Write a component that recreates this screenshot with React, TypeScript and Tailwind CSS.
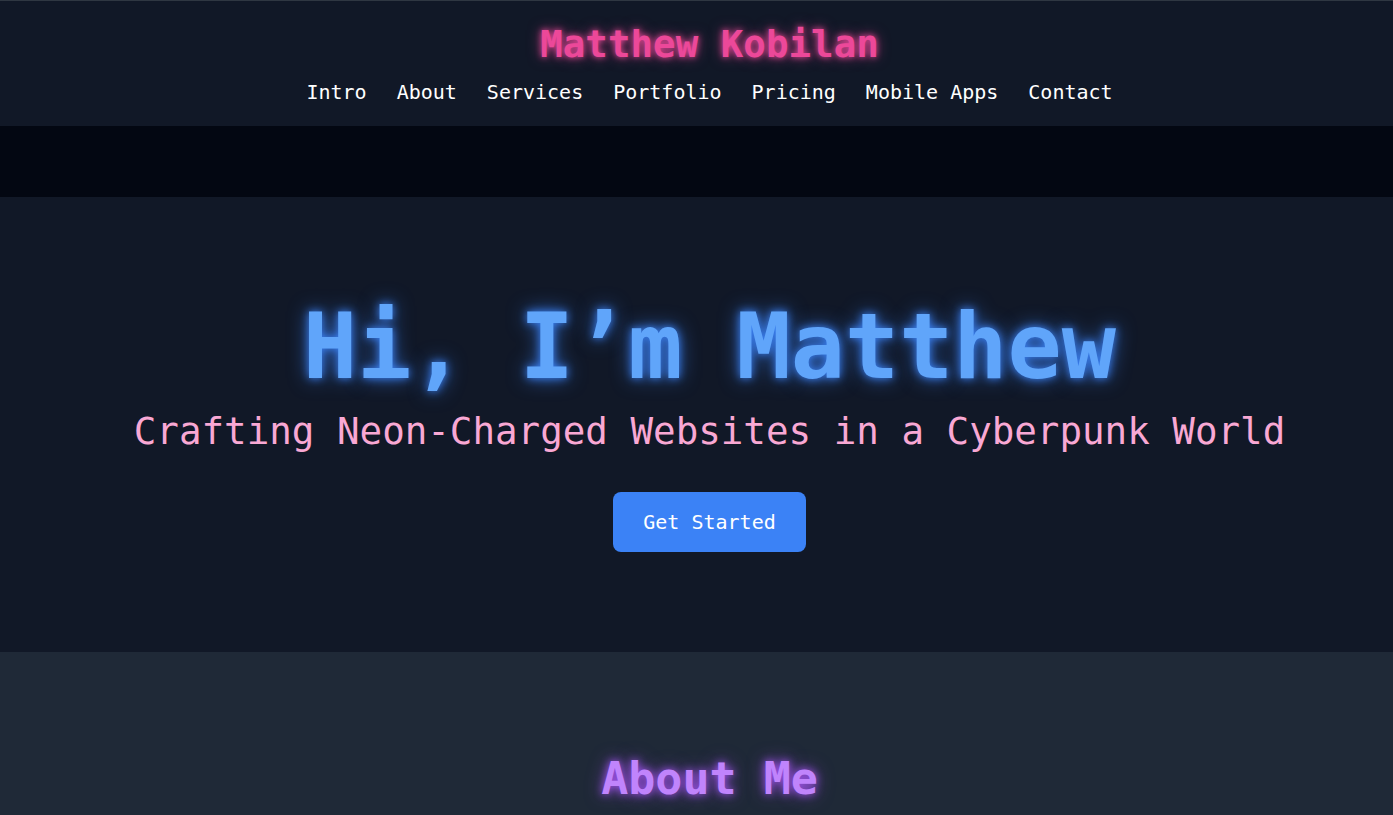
import React from 'react';

const links = ['Intro', 'About', 'Services', 'Portfolio', 'Pricing', 'Mobile Apps', 'Contact'];

const App: React.FC = () => {
  return (
    <div className="min-h-screen bg-[#1f2937] font-['DejaVu_Sans_Mono',monospace] text-white">
      {/* header */}
      <header className="border-t border-[#2f3742] bg-[#111827] pt-[20px] pb-[20px] pl-[26px]">
        <h1 className="text-center text-[37.5px] leading-[47px] font-bold text-[#ec4899] [text-shadow:0_0_6px_#ec4899,0_0_14px_rgba(236,72,153,0.6)]">
          Matthew Kobilan
        </h1>
        <nav className="mt-[10px] flex justify-center gap-[30px]">
          {links.map((l) => (
            <a key={l} href={`#${l.toLowerCase()}`} className="text-xl leading-[28px] text-white">
              {l}
            </a>
          ))}
        </nav>
      </header>

      <div className="h-[71px] bg-[#030712]"></div>

      {/* hero */}
      <section id="intro" className="bg-[#111827] pt-[105px] pb-[100px] pl-[26px] text-center">
        <h2 className="text-[90px] leading-[90px] font-bold text-[#60a5fa] [text-shadow:0_0_8px_#3b82f6,0_0_20px_rgba(59,130,246,0.7)]">
          Hi, I’m Matthew
        </h2>
        <p className="mt-[17px] text-[37.5px] leading-[45px] text-[#f9a8d4]">
          Crafting Neon-Charged Websites in a Cyberpunk World
        </p>
        <div className="mt-[38px] flex justify-center">
          <button className="rounded-lg bg-[#3b82f6] px-[30px] py-4 text-xl leading-[28px] text-white">
            Get Started
          </button>
        </div>
      </section>

      {/* about */}
      <section id="about" className="bg-[#1f2937] pt-[100px] pb-24 pl-[26px] text-center">
        <h2 className="text-[45px] leading-[54px] font-bold text-[#c084fc] [text-shadow:0_0_8px_#a855f7,0_0_18px_rgba(168,85,247,0.6)]">
          About Me
        </h2>
      </section>
    </div>
  );
};

export default App;
